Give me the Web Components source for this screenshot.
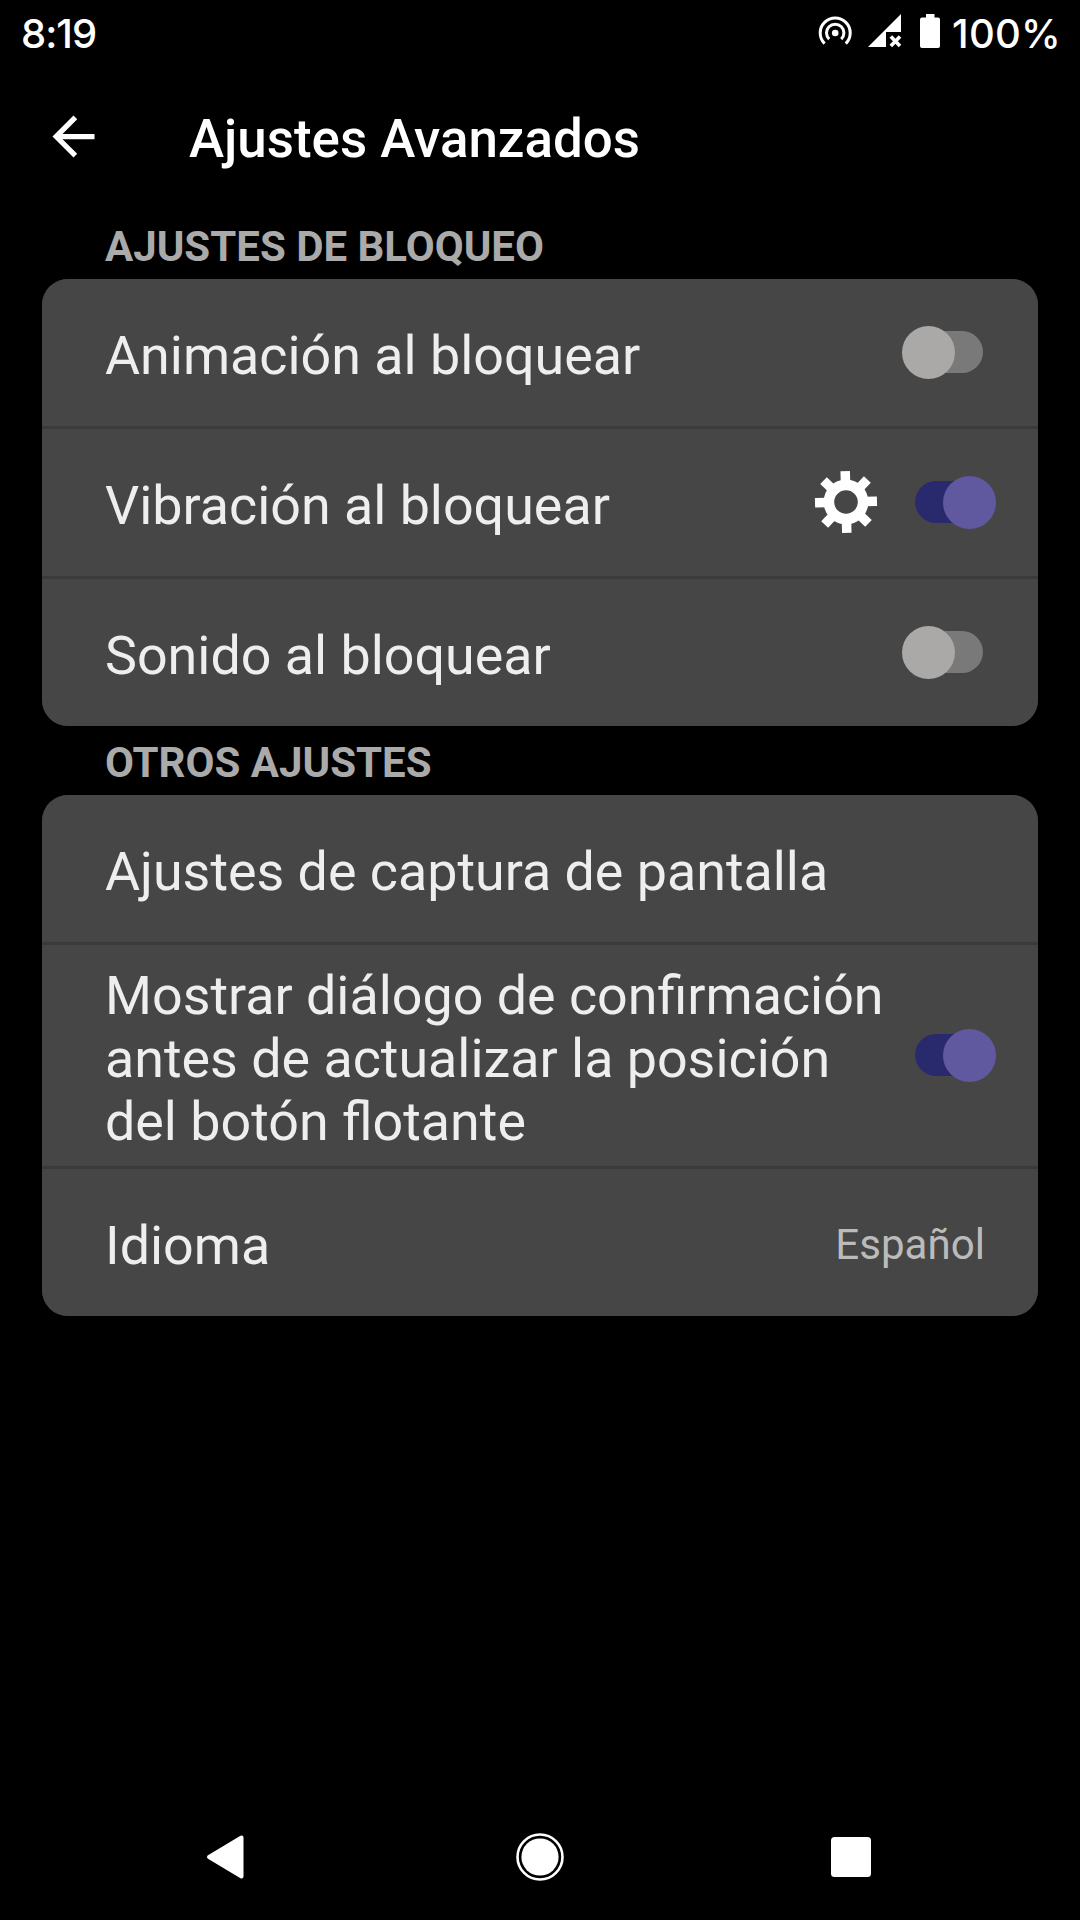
<!DOCTYPE html>
<html lang="es">
<head>
<meta charset="utf-8">
<title>Ajustes Avanzados</title>
<style>
body {
  margin: 0;
  background: #000;
  font-family: Roboto, "Liberation Sans", sans-serif;
}
</style>
</head>
<body>
<settings-screen>
  <status-bar slot="status" time="8:19" battery="100%"></status-bar>
  <app-bar slot="header">Ajustes Avanzados</app-bar>
  <settings-group heading="AJUSTES DE BLOQUEO">
    <settings-row>Animación al bloquear<toggle-switch slot="end"></toggle-switch></settings-row>
    <settings-row>Vibración al bloquear<gear-icon slot="end"></gear-icon><toggle-switch slot="end" checked></toggle-switch></settings-row>
    <settings-row>Sonido al bloquear<toggle-switch slot="end"></toggle-switch></settings-row>
  </settings-group>
  <settings-group heading="OTROS AJUSTES">
    <settings-row>Ajustes de captura de pantalla</settings-row>
    <settings-row>Mostrar diálogo de confirmación antes de actualizar la posición del botón flotante<toggle-switch slot="end" checked></toggle-switch></settings-row>
    <settings-row>Idioma<row-value slot="end">Español</row-value></settings-row>
  </settings-group>
  <nav-bar slot="nav"></nav-bar>
</settings-screen>

<script>
class BaseElement extends HTMLElement {
  connectedCallback() {
    if (this.shadowRoot) return;
    const shadow = this.attachShadow({ mode: "open" });
    shadow.innerHTML = this.render();
  }
}

class SettingsScreen extends BaseElement {
  render() {
    return `<style>
:host {
  display: flex;
  flex-direction: column;
  box-sizing: border-box;
  width: 1080px;
  height: 1920px;
  background: #000;
  overflow: hidden;
}
main {
  flex: 1;
  padding: 0 42px;
}
</style>
<slot name="status"></slot>
<slot name="header"></slot>
<main><slot></slot></main>
<slot name="nav"></slot>`;
  }
}

class StatusBar extends BaseElement {
  render() {
    return `<style>
:host {
  display: flex;
  justify-content: space-between;
  height: 63px;
  padding: 0 19px 0 21px;
  color: #fff;
  font: 500 40px/67px Inter, Roboto, sans-serif;
}
.time {
  letter-spacing: -1px;
}
.icons {
  display: flex;
}
svg {
  display: block;
  width: 137px;
  height: 63px;
}
.battery {
  letter-spacing: .25px;
}
</style>
<span class="time">${this.getAttribute("time")}</span>
<div class="icons">
  <svg viewBox="815 0 137 63" fill="#fff">
    <g fill="none" stroke="#fff" stroke-width="3">
      <path d="M824.6 43.6A15 15 0 1 1 845.8 43.6"/>
      <path d="M829.2 39.2A8.7 8.7 0 1 1 841.2 39.2"/>
    </g>
    <circle cx="835.2" cy="33" r="3.3"/>
    <path d="M868 47L901 14V32H886V47Z"/>
    <path d="M890.8 36.5L900 46M900 36.5L890.8 46" stroke="#fff" stroke-width="3.6"/>
    <path d="M926 14h8.5v3.5h3.5a2 2 0 0 1 2 2v26.5a2 2 0 0 1-2 2h-16a2 2 0 0 1-2-2v-26.5a2 2 0 0 1 2-2h4z"/>
  </svg>
  <span class="battery">${this.getAttribute("battery")}</span>
</div>`;
  }
}

class AppBar extends BaseElement {
  render() {
    return `<style>
:host {
  display: flex;
  align-items: center;
  height: 147px;
  padding-left: 42px;
  color: #fff;
}
svg {
  width: 63px;
  height: 63px;
}
h1 {
  margin: 0 0 0 84px;
  padding-top: 5px;
  font-size: 52.9px;
  font-weight: 500;
  line-height: 62px;
}
</style>
<svg viewBox="0 0 24 24" fill="#fff"><path d="M20 11H7.83l5.59-5.59L12 4l-8 8 8 8 1.41-1.41L7.83 13H20z"/></svg>
<h1><slot></slot></h1>`;
  }
}

class SettingsGroup extends BaseElement {
  render() {
    return `<style>
:host {
  display: block;
}
h2 {
  box-sizing: border-box;
  height: 69px;
  margin: 0;
  padding: 12px 0 0 63px;
  color: #aaa;
  font-size: 42px;
  font-weight: 700;
  line-height: 49px;
}
.card {
  display: flex;
  flex-direction: column;
  gap: 3px;
  border-radius: 26px;
  overflow: hidden;
  background: #3b3b3b;
}
</style>
<h2>${this.getAttribute("heading")}</h2>
<div class="card"><slot></slot></div>`;
  }
}

class SettingsRow extends BaseElement {
  render() {
    return `<style>
:host {
  display: flex;
  align-items: center;
  box-sizing: border-box;
  min-height: 147px;
  padding: 16px 55px 16px 63px;
  background: #464646;
  color: #eee;
  font-size: 53.8px;
  line-height: 63px;
}
.label {
  flex: 1;
  padding-top: 3px;
  margin-bottom: -3px;
}
.end {
  display: flex;
  align-items: center;
}
</style>
<div class="label"><slot></slot></div>
<div class="end"><slot name="end"></slot></div>`;
  }
}

class ToggleSwitch extends BaseElement {
  render() {
    return `<style>
:host {
  --track: #797979;
  --knob: #aaa9a7;
  display: flex;
  align-items: center;
  width: 68px;
  height: 42px;
  margin: 0 0 1px 30px;
  border-radius: 21px;
  background: var(--track);
}
:host([checked]) {
  --track: #29296e;
  --knob: #6059a0;
  justify-content: flex-end;
}
/* the knob is taller than the track and hangs over its end */
i {
  flex: none;
  width: 53px;
  height: 53px;
  margin: 0 -13px;
  border-radius: 50%;
  background: var(--knob);
}
</style>
<i></i>`;
  }
}

class GearIcon extends BaseElement {
  render() {
    const teeth = [0, 45, 90, 135, 180, 225, 270, 315]
      .map((a) => `<rect x="-4.75" y="-31" width="9.5" height="13" transform="rotate(${a})"/>`)
      .join("");
    return `<style>
:host, svg {
  display: block;
  width: 62px;
  height: 62px;
}
:host {
  margin: 0 8px 1px 0;
}
</style>
<svg viewBox="-31 -31 62 62" fill="#fff" overflow="visible">
  <g transform="rotate(-1.5)">${teeth}</g>
  <circle r="17.1" fill="none" stroke="#fff" stroke-width="10.6"/>
</svg>`;
  }
}

class RowValue extends BaseElement {
  render() {
    return `<style>
:host {
  display: block;
  padding-top: 4px;
  margin-right: -2px;
  color: #bbb;
  font-size: 42.1px;
  line-height: 49px;
}
</style>
<slot></slot>`;
  }
}

class NavBar extends BaseElement {
  render() {
    return `<style>
:host, svg {
  display: block;
  width: 1080px;
  height: 126px;
}
</style>
<svg viewBox="0 1794 1080 126" fill="#fff">
  <path d="M241.5 1837.5V1876.5L209 1857Z" stroke="#fff" stroke-width="4" stroke-linejoin="round"/>
  <circle cx="540" cy="1857" r="22.5" fill="none" stroke="#fff" stroke-width="2.6"/>
  <circle cx="540" cy="1857" r="18.6"/>
  <rect x="831" y="1837" width="40" height="40" rx="3.5"/>
</svg>`;
  }
}

customElements.define("settings-screen", SettingsScreen);
customElements.define("status-bar", StatusBar);
customElements.define("app-bar", AppBar);
customElements.define("settings-group", SettingsGroup);
customElements.define("settings-row", SettingsRow);
customElements.define("toggle-switch", ToggleSwitch);
customElements.define("gear-icon", GearIcon);
customElements.define("row-value", RowValue);
customElements.define("nav-bar", NavBar);
</script>
</body>
</html>
